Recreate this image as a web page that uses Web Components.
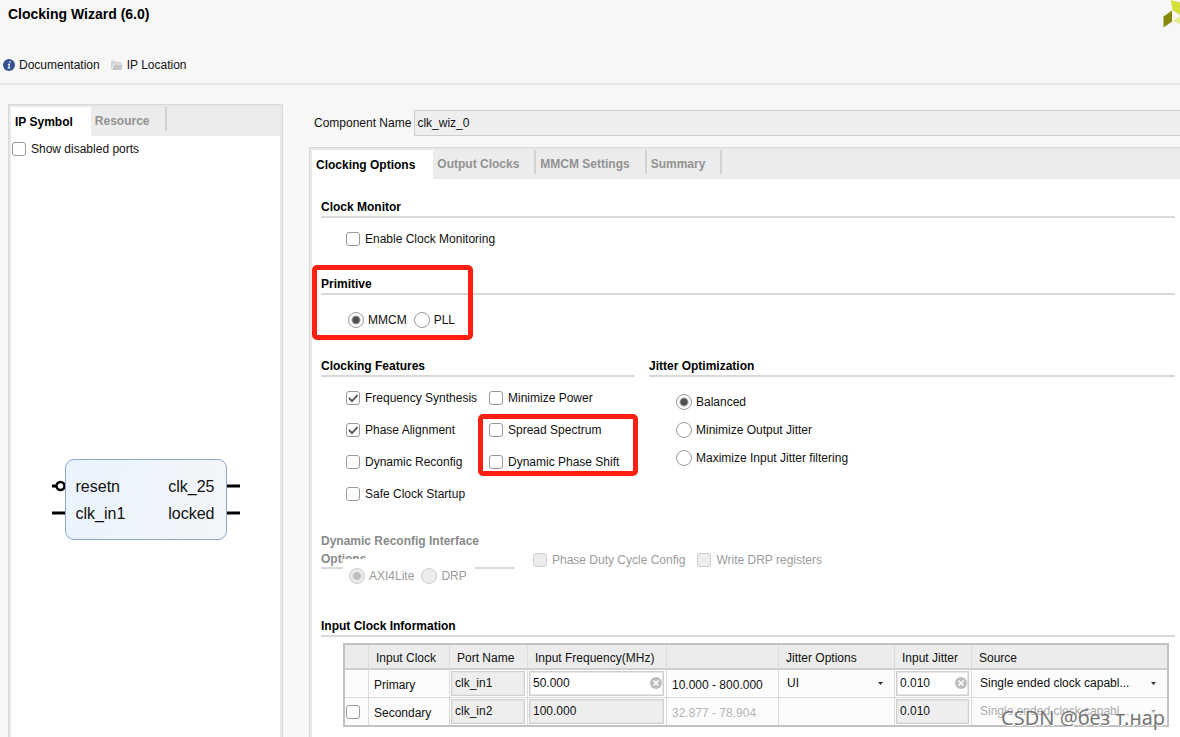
<!DOCTYPE html>
<html lang="en">
<head>
<meta charset="utf-8">
<title>Clocking Wizard</title>
<style>
  html, body { margin: 0; }
  body {
    font: 12px/16px "Liberation Sans", Arial, sans-serif;
    color: #111;
    background: #f7f7f7;
  }
</style>
</head>
<body>
<clocking-wizard></clocking-wizard>

<script>
const define = (name, html, setup) => {
  const template = document.createElement('template');
  template.innerHTML = '<style>*{box-sizing:border-box}</style>' + html;
  customElements.define(name, class extends HTMLElement {
    connectedCallback() {
      if (this.shadowRoot) return;
      const root = this.attachShadow({ mode: 'open' });
      root.append(template.content.cloneNode(true));
      if (setup) setup(this, root);
    }
  });
};

/* Outlined call-out laid over its positioned parent */
define('call-out', `
<style>
  :host { position: absolute; box-sizing: border-box; border: 5px solid #ff1f10; border-radius: 5px; pointer-events: none; z-index: 2; }
</style>`);

/* Header with title, toolbar and brand mark */
define('wizard-header', `
<style>
  :host { display: block; position: relative; padding: 4px 8px 11px 2px; border-bottom: 2px solid #e6e6e6; }
  h1 { margin: 0 0 34px 6px; font-size: 14px; line-height: 20px; color: #000; }
  nav { display: flex; gap: 10px; }
  a { display: flex; align-items: center; gap: 4px; color: inherit; text-decoration: none; line-height: 14px; }
  .brand { position: absolute; top: 0; right: 0; }
</style>
<h1>Clocking Wizard (6.0)</h1>
<nav>
  <a href="#documentation">
    <svg width="13" height="14" viewBox="0 0 13 14"><circle cx="7" cy="7" r="6" fill="#34528f"/><path d="M7.6 3.2h1.2l-.3 1.6H7.2zM6 5.8h2.2L7.5 9.4h.9l-.2 1.1H5.6l.2-1.1h.5l.5-2.500H5.8z" fill="#fff"/></svg>
    Documentation</a>
  <a href="#location">
    <svg width="13" height="14" viewBox="0 0 13 14"><path d="M1 11V3.5q0-.8.8-.8h3l1.200 1.300h4.800q.7 0 .7.7v1H4.200q-.7 0-1 .7L1.600 11z" fill="#d2d2d2"/><path d="M4.600 6.600h8L11.400 12H2.200l1.600-4.800q.2-.6.8-.6z" fill="#c6c6c6"/></svg>
    IP Location</a>
</nav>
<svg class="brand" width="17" height="28" viewBox="0 0 17 28">
  <path d="M8 0l9 2.500V15L9.300 10z" fill="#d5e03c"/><path d="M9 10.500v11l-8.500 6V16.500z" fill="#858a0c"/><path d="M9.600 20.700l7.400-4.200V24z" fill="#e4eb8b"/>
</svg>`);

/* Tab bar: the tab labels come in the "tabs" attribute, the page in the slot */
define('tab-panel', `
<style>
  :host { display: flex; flex-direction: column; border: solid #d9d9d9; border-width: 1px 0 0 1px; }
  .frame { flex: 1; display: flex; flex-direction: column; border: solid #e8e8e8; border-width: 2px 0 0 2px; background: #fff; }
  :host([closed]) { border-right-width: 1px; }
  :host([closed]) .frame { border-right-width: 2px; }
  .tabs { display: flex; height: 29px; background: #ececec; }
  button { font: bold 12px/16px "Liberation Sans", Arial, sans-serif; color: #929292; border: 0; background: none;
    padding: 5px 15px 1px 4px; height: 24px; text-align: left; white-space: nowrap; border-right: 2px solid #d2d2d2; }
  button[aria-selected=true] { height: 29px; color: #000; background: #fff; border-right: 0; padding: 0 18px 0 4px; }
  .page { flex: 1; display: block; }
</style>
<div class="frame"><div class="tabs" role="tablist"></div><div class="page"><slot></slot></div></div>`,
(host, root) => {
  const bar = root.querySelector('.tabs');
  host.getAttribute('tabs').split('|').forEach((label, i) => {
    const b = document.createElement('button');
    b.type = 'button';
    b.setAttribute('role', 'tab');
    b.setAttribute('aria-selected', i === 0);
    b.textContent = label;
    bar.append(b);
  });
});

define('check-option', `
<style>
  :host { display: block; }
  label { display: flex; align-items: center; gap: 5px; height: 16px; white-space: nowrap; }
  input { appearance: none; width: 14px; height: 14px; margin: 0; border: 1px solid #999; border-radius: 3px; background: #fff; }
  .box { position: relative; display: flex; }
  svg { position: absolute; top: 0; left: 0; display: none; pointer-events: none; }
  input:checked + svg { display: block; }
  :host([disabled]) { color: #9b9b9b; }
  :host([disabled]) input { border-color: #ccc; background: #ececec; }
</style>
<label><span class="box"><input type="checkbox"><svg width="14" height="14" viewBox="0 0 14 14"><path d="M3 7l3 3.200 5.500-6" fill="none" stroke="#555" stroke-width="1.900"/></svg></span><slot></slot></label>`,
(host, root) => {
  const input = root.querySelector('input');
  input.checked = host.hasAttribute('checked');
  input.disabled = host.hasAttribute('disabled');
  if (host.hasAttribute('label')) input.setAttribute('aria-label', host.getAttribute('label'));
});

/* Radio buttons of one group; the first is chosen */
define('radio-options', `
<style>
  :host { display: flex; gap: 7px; }
  :host([vertical]) { flex-direction: column; gap: 12px; }
  label { display: flex; align-items: center; gap: 4px; height: 16px; white-space: nowrap; }
  input { appearance: none; width: 16px; height: 16px; margin: 0; border: 1px solid #999; border-radius: 50%; background: #fff; }
  input:checked { background: radial-gradient(circle, #505050 3px, #fff 5px); }
  :host([disabled]) { color: #9b9b9b; }
  :host([disabled]) input { border-color: #ccc; background: #ececec; }
  :host([disabled]) input:checked { background: radial-gradient(circle, #bdbdbd 3px, #ececec 5px); }
</style>`,
(host, root) => {
  host.getAttribute('options').split('|').forEach((text, i) => {
    const label = document.createElement('label');
    const input = document.createElement('input');
    input.type = 'radio';
    input.name = 'choice';
    input.checked = i === 0;
    input.disabled = host.hasAttribute('disabled');
    label.append(input, text);
    root.append(label);
  });
});

define('option-section', `
<style>
  :host { display: block; position: relative; }
  h2 { margin: 0; font-size: 12px; line-height: 16px; padding-bottom: 1px; border-bottom: 2px solid #d9d9d9; color: #000; }
</style>
<h2></h2><slot></slot>`,
(host, root) => { root.querySelector('h2').textContent = host.getAttribute('heading'); });

/* Block diagram of the generated core */
define('ip-symbol', `
<style>
  :host { display: flex; justify-content: center; font-size: 16px; line-height: 27px; color: #111; }
  svg { display: block; }
  .core { width: 162px; height: 81px; padding: 13px 11px 0 10px; display: grid; grid-template-columns: 1fr auto; align-content: start;
    border: 1px solid #8ea6d2; border-radius: 9px; background: linear-gradient(100deg, #eaf3fd, #f3f6f9); }
  .out { text-align: right; }
</style>
<svg width="14" height="81" viewBox="0 0 14 81" fill="none" stroke="#000" stroke-width="3"><path d="M1 27h4M1 54h13"/><circle cx="9.500" cy="27" r="4" stroke-width="2.500"/></svg>
<div class="core"><span>resetn</span><span class="out">clk_25</span><span>clk_in1</span><span class="out">locked</span></div>
<svg width="14" height="81" viewBox="0 0 14 81" fill="none" stroke="#000" stroke-width="3"><path d="M0 27h13M0 54h13"/></svg>`);

define('clock-table', `
<style>
  :host { display: block; }
  table { width: 100%; table-layout: fixed; border-collapse: separate; border-spacing: 0; border: 2px solid #c2c2c2; background: #fcfcfc; }
  th, td { padding: 0; border-right: 1px solid #dcdcdc; text-align: left; font-weight: normal; white-space: nowrap; overflow: hidden; }
  th:last-child, td:last-child { border-right: 0; }
  th { height: 25px; padding: 2px 0 0 7px; background: #ececec; border-bottom: 2px solid #cfcfcf; }
  td { height: 27px; }
  tr:nth-child(1) td { border-bottom: 1px solid #dcdcdc; }
  .text { padding: 3px 0 0 5px; }
  .field { padding: 1px 2px 1px 1px; }
  .faint { color: #b5b5b5; }
  .wrap { position: relative; display: block; }
  input, select { display: block; width: 100%; height: 25px; margin: 0; font: inherit; color: #111; border: 1px solid #cfcfcf; border-radius: 0; padding: 0 3px 2px 3px; background: #fff; }
  input { outline: 1px solid #e6e6e6; outline-offset: -2px; }
  input:read-only { background: #eee; }
  select { appearance: none; border: 0; background: none; opacity: 1; padding-left: 7px; }
  select:disabled { color: #aaa; }
  svg { position: absolute; pointer-events: none; }
  .clear { right: 2px; top: 6px; }
  .arrow { right: 9px; top: 11px; }
</style>
<table>
  <colgroup><col style="width:24px"><col style="width:81px"><col style="width:78px"><col style="width:139px"><col style="width:112px"><col style="width:116px"><col style="width:77px"><col></colgroup>
  <thead><tr><th></th><th>Input Clock</th><th>Port Name</th><th>Input Frequency(MHz)</th><th></th><th>Jitter Options</th><th>Input Jitter</th><th>Source</th></tr></thead>
  <tbody>
    <tr>
      <td></td><td class="text">Primary</td>
      <td class="field"><input aria-label="Primary port name" value="clk_in1" readonly></td>
      <td class="field"><span class="wrap"><input aria-label="Primary frequency" value="50.000"><svg class="clear" width="12" height="12" viewBox="0 0 12 12"><circle cx="6" cy="6" r="6" fill="#bdbdbd"/><path d="M3.500 3.500l5 5m0-5l-5 5" stroke="#fff" stroke-width="1.600"/></svg></span></td>
      <td class="text">10.000 - 800.000</td>
      <td class="field"><span class="wrap"><select aria-label="Primary jitter options"><option>UI</option></select><svg class="arrow" width="5" height="3" viewBox="0 0 5 3"><path d="M0 0h5L2.500 3z" fill="#333"/></svg></span></td>
      <td class="field"><span class="wrap"><input aria-label="Primary input jitter" value="0.010"><svg class="clear" width="12" height="12" viewBox="0 0 12 12"><circle cx="6" cy="6" r="6" fill="#bdbdbd"/><path d="M3.500 3.500l5 5m0-5l-5 5" stroke="#fff" stroke-width="1.600"/></svg></span></td>
      <td class="field"><span class="wrap"><select aria-label="Primary source"><option>Single ended clock capabl...</option></select><svg class="arrow" width="5" height="3" viewBox="0 0 5 3"><path d="M0 0h5L2.500 3z" fill="#333"/></svg></span></td>
    </tr>
    <tr>
      <td class="field"><check-option label="Enable secondary clock"></check-option></td><td class="text">Secondary</td>
      <td class="field"><input aria-label="Secondary port name" value="clk_in2" readonly></td>
      <td class="field"><input aria-label="Secondary frequency" value="100.000" readonly></td>
      <td class="text faint">32.877 - 78.904</td>
      <td></td>
      <td class="field"><input aria-label="Secondary input jitter" value="0.010" readonly></td>
      <td class="field"><span class="wrap"><select aria-label="Secondary source" disabled><option>Single ended clock capabl...</option></select><svg class="arrow" width="5" height="3" viewBox="0 0 5 3"><path d="M0 0h5L2.500 3z" fill="#aaa"/></svg></span></td>
    </tr>
  </tbody>
</table>`);

define('clocking-options', `
<style>
  :host { display: flex; flex-direction: column; padding: 20px 5px 0 9px; }
  .monitor { padding: 13px 0 29px 25px; }
  .primitive { padding: 17px 0 30px 27px; }
  .pair { display: grid; grid-template-columns: 314px 1fr; gap: 14px; }
  .features { display: grid; grid-template-columns: 143px 1fr; gap: 16px 0; padding: 13px 0 0 25px; }
  .features check-option:nth-child(odd) { grid-column: 1; }
  .jitter { padding: 17px 0 0 27px; }
  .reconfig { display: grid; grid-template-columns: 194px 1fr; gap: 18px; margin-top: 30px; height: 86px; color: #8a8a8a; }
  .legend { position: relative; }
  h2 { margin: 0; padding-right: 20px; font-size: 12px; line-height: 18px; height: 37px; border-bottom: 2px solid #d9d9d9; }
  .legend radio-options { position: absolute; left: 22px; top: 27px; padding: 9px 8px 0 6px; background: #fff; }
  .extra { display: flex; gap: 12px; padding-top: 20px; }
  clock-table { margin: 6px 6px 0 22px; }
  .mark-primitive { left: -9px; top: -11px; width: 161px; height: 75px; }
  .mark-features { left: 157px; top: 56px; width: 160px; height: 62px; }
</style>
<option-section heading="Clock Monitor">
  <div class="monitor"><check-option>Enable Clock Monitoring</check-option></div>
</option-section>
<option-section heading="Primitive">
  <call-out class="mark-primitive"></call-out>
  <div class="primitive"><radio-options options="MMCM|PLL"></radio-options></div>
</option-section>
<div class="pair">
  <option-section heading="Clocking Features">
    <call-out class="mark-features"></call-out>
    <div class="features">
      <check-option checked>Frequency Synthesis</check-option><check-option>Minimize Power</check-option>
      <check-option checked>Phase Alignment</check-option><check-option>Spread Spectrum</check-option>
      <check-option>Dynamic Reconfig</check-option><check-option>Dynamic Phase Shift</check-option>
      <check-option>Safe Clock Startup</check-option>
    </div>
  </option-section>
  <option-section heading="Jitter Optimization">
    <div class="jitter"><radio-options vertical options="Balanced|Minimize Output Jitter|Maximize Input Jitter filtering"></radio-options></div>
  </option-section>
</div>
<div class="reconfig">
  <div class="legend">
    <h2>Dynamic Reconfig Interface Options</h2>
    <radio-options disabled options="AXI4Lite|DRP"></radio-options>
  </div>
  <div class="extra"><check-option disabled>Phase Duty Cycle Config</check-option><check-option disabled>Write DRP registers</check-option></div>
</div>
<option-section heading="Input Clock Information"><clock-table></clock-table></option-section>`);

define('clocking-wizard', `
<style>
  :host { display: flex; flex-direction: column; min-height: 100vh; position: relative; overflow: hidden; }
  main { flex: 1; display: grid; grid-template-columns: 275px minmax(0, 1fr); gap: 26px; padding: 19px 0 0 8px; }
  .side { display: flex; flex-direction: column; }
  .side check-option { padding: 5px 0 0 1px; }
  ip-symbol { padding: 302px 0 0 0; }
  .work { display: flex; flex-direction: column; padding-top: 6px; }
  .name { display: flex; align-items: center; gap: 3px; padding-left: 5px; margin-bottom: 11px; }
  .name input { flex: 1; height: 26px; margin: 0; padding: 0 2px; font: inherit; color: #111; background: #eee; border: 1px solid #cdcdcd; border-right: 0; }
  .work tab-panel { flex: 1; }
  .watermark { position: absolute; right: 15px; bottom: 5px; font: 20px/28px "Noto Sans", sans-serif; color: #777; text-shadow: 1px 1px 0 #fff; white-space: nowrap; z-index: 3; }
</style>
<wizard-header></wizard-header>
<main>
  <tab-panel class="side" closed tabs="IP Symbol|Resource">
    <check-option>Show disabled ports</check-option>
    <ip-symbol></ip-symbol>
  </tab-panel>
  <div class="work">
    <div class="name"><label for="component">Component Name</label><input id="component" value="clk_wiz_0" readonly></div>
    <tab-panel tabs="Clocking Options|Output Clocks|MMCM Settings|Summary"><clocking-options></clocking-options></tab-panel>
  </div>
</main>
<span class="watermark">CSDN @без т.нар</span>`);
</script>
</body>
</html>
